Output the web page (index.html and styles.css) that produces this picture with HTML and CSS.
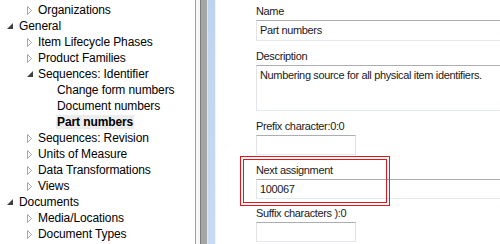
FILE: index.html
```html
<!DOCTYPE html>
<html lang="en">
<head>
  <meta charset="UTF-8">
  <title>Sequences: Identifier</title>
  <link rel="stylesheet" href="styles.css">
</head>
<body>
  <div class="tree">
    <div class="row lvl2"><span class="toggle"><svg width="5" height="9"><path d="M0.5 0.5 L4.5 4.5 L0.5 8.5 Z" fill="none" stroke="#a6a6a6"/></svg></span>Organizations</div>
    <div class="row lvl1"><span class="toggle"><svg width="6" height="6"><path d="M6 0 L6 6 L0 6 Z" fill="#404040"/></svg></span>General</div>
    <div class="row lvl2"><span class="toggle"><svg width="5" height="9"><path d="M0.5 0.5 L4.5 4.5 L0.5 8.5 Z" fill="none" stroke="#a6a6a6"/></svg></span>Item Lifecycle Phases</div>
    <div class="row lvl2"><span class="toggle"><svg width="5" height="9"><path d="M0.5 0.5 L4.5 4.5 L0.5 8.5 Z" fill="none" stroke="#a6a6a6"/></svg></span>Product Families</div>
    <div class="row lvl2"><span class="toggle"><svg width="6" height="6"><path d="M6 0 L6 6 L0 6 Z" fill="#404040"/></svg></span>Sequences: Identifier</div>
    <div class="row lvl3"><span class="toggle"></span>Change form numbers</div>
    <div class="row lvl3"><span class="toggle"></span>Document numbers</div>
    <div class="row lvl3"><span class="toggle"></span><span class="selected">Part numbers</span></div>
    <div class="row lvl2"><span class="toggle"><svg width="5" height="9"><path d="M0.5 0.5 L4.5 4.5 L0.5 8.5 Z" fill="none" stroke="#a6a6a6"/></svg></span>Sequences: Revision</div>
    <div class="row lvl2"><span class="toggle"><svg width="5" height="9"><path d="M0.5 0.5 L4.5 4.5 L0.5 8.5 Z" fill="none" stroke="#a6a6a6"/></svg></span>Units of Measure</div>
    <div class="row lvl2"><span class="toggle"><svg width="5" height="9"><path d="M0.5 0.5 L4.5 4.5 L0.5 8.5 Z" fill="none" stroke="#a6a6a6"/></svg></span>Data Transformations</div>
    <div class="row lvl2"><span class="toggle"><svg width="5" height="9"><path d="M0.5 0.5 L4.5 4.5 L0.5 8.5 Z" fill="none" stroke="#a6a6a6"/></svg></span>Views</div>
    <div class="row lvl1"><span class="toggle"><svg width="6" height="6"><path d="M6 0 L6 6 L0 6 Z" fill="#404040"/></svg></span>Documents</div>
    <div class="row lvl2"><span class="toggle"><svg width="5" height="9"><path d="M0.5 0.5 L4.5 4.5 L0.5 8.5 Z" fill="none" stroke="#a6a6a6"/></svg></span>Media/Locations</div>
    <div class="row lvl2"><span class="toggle"><svg width="5" height="9"><path d="M0.5 0.5 L4.5 4.5 L0.5 8.5 Z" fill="none" stroke="#a6a6a6"/></svg></span>Document Types</div>
  </div>

  <div class="splitter">
    <span class="edge"></span>
    <span class="gap"></span>
    <span class="dark-edge"></span>
    <span class="bar"></span>
    <span class="hilite"></span>
    <span class="blue"></span>
    <span class="gap1"></span>
  </div>

  <div class="form">
    <div class="field first">
      <label>Name</label>
      <div class="box wide name">Part numbers</div>
    </div>
    <div class="field">
      <label>Description</label>
      <div class="box wide memo">Numbering source for all physical item identifiers.</div>
    </div>
    <div class="field">
      <label>Prefix character:0:0</label>
      <div class="box small"></div>
    </div>
    <div class="field">
      <label>Next assignment</label>
      <div class="box wide">100067</div>
    </div>
    <div class="field last">
      <label>Suffix characters ):0</label>
      <div class="box small"></div>
    </div>

    <div class="highlight"></div>
  </div>
</body>
</html>
```

FILE: styles.css
```css
body {
  margin: 0;
  width: 500px;
  height: 244px;
  overflow: hidden;
  display: flex;
  background: #fff;
  color: #000;
}

/* tree */
.tree {
  width: 195px;
  flex-shrink: 0;
  padding-top: 2px;
  font-family: 'Liberation Sans', Arial, sans-serif;
  font-size: 12px;
  letter-spacing: -0.1px;
}

.row {
  height: 16px;
  display: flex;
  align-items: center;
  white-space: nowrap;
}

.lvl2 { padding-left: 19px; }
.lvl3 { padding-left: 38px; }

.toggle {
  width: 19px;
  flex-shrink: 0;
  display: flex;
  justify-content: center;
  align-items: center;
}

.lvl2 .toggle { padding-left: 2px; width: 17px; }

.toggle svg { display: block; }

.selected {
  font-weight: bold;
  background: #ededed;
  padding: 0 1px;
  margin-left: -1px;
  line-height: 14px;
}

/* splitter */
.splitter {
  display: flex;
  flex-shrink: 0;
  height: 100%;
}

.splitter span { display: block; height: 100%; }
.edge { width: 1px; background: #a0a0a0; }
.gap { width: 4px; background: #f7f7f7; }
.dark-edge { width: 1px; background: #7a7a7a; }
.bar { width: 6px; background: #a5a5a5; }
.hilite { width: 1px; background: #e6e6e6; }
.blue { width: 7px; background: linear-gradient(#bed3ee, #c9dbf2); }
.gap1 { width: 1px; background: #eef3fa; }

/* form */
.form {
  position: relative;
  flex: 1;
  min-width: 0;
  overflow: hidden;
  padding: 3px 0 0 40px;
  font-family: 'Liberation Sans', Arial, sans-serif;
  font-size: 11px;
  letter-spacing: -0.35px;
  color: #1a1a1a;
}

.field { margin-top: 7px; }
.field.first { margin-top: 0; }
.field.last { margin-top: 6px; }

label {
  display: block;
  line-height: 16px;
  margin-bottom: 1px;
  white-space: nowrap;
}

.box {
  box-sizing: border-box;
  height: 20px;
  padding: 0 3px;
  line-height: 18px;
  border: 1px solid;
  border-color: #abadb3 #dbdfe6 #e3e9ef #e2e3ea;
  background: #fff;
  white-space: nowrap;
}

.box.wide { width: 270px; }
.box.name { height: 21px; line-height: 19px; }
.box.memo { height: 46px; line-height: 18px; }
.box.small { width: 100px; }

.highlight {
  position: absolute;
  left: 24px;
  top: 156px;
  width: 150px;
  height: 50px;
  box-sizing: border-box;
  border: 4px double #e8141b;
}
```
